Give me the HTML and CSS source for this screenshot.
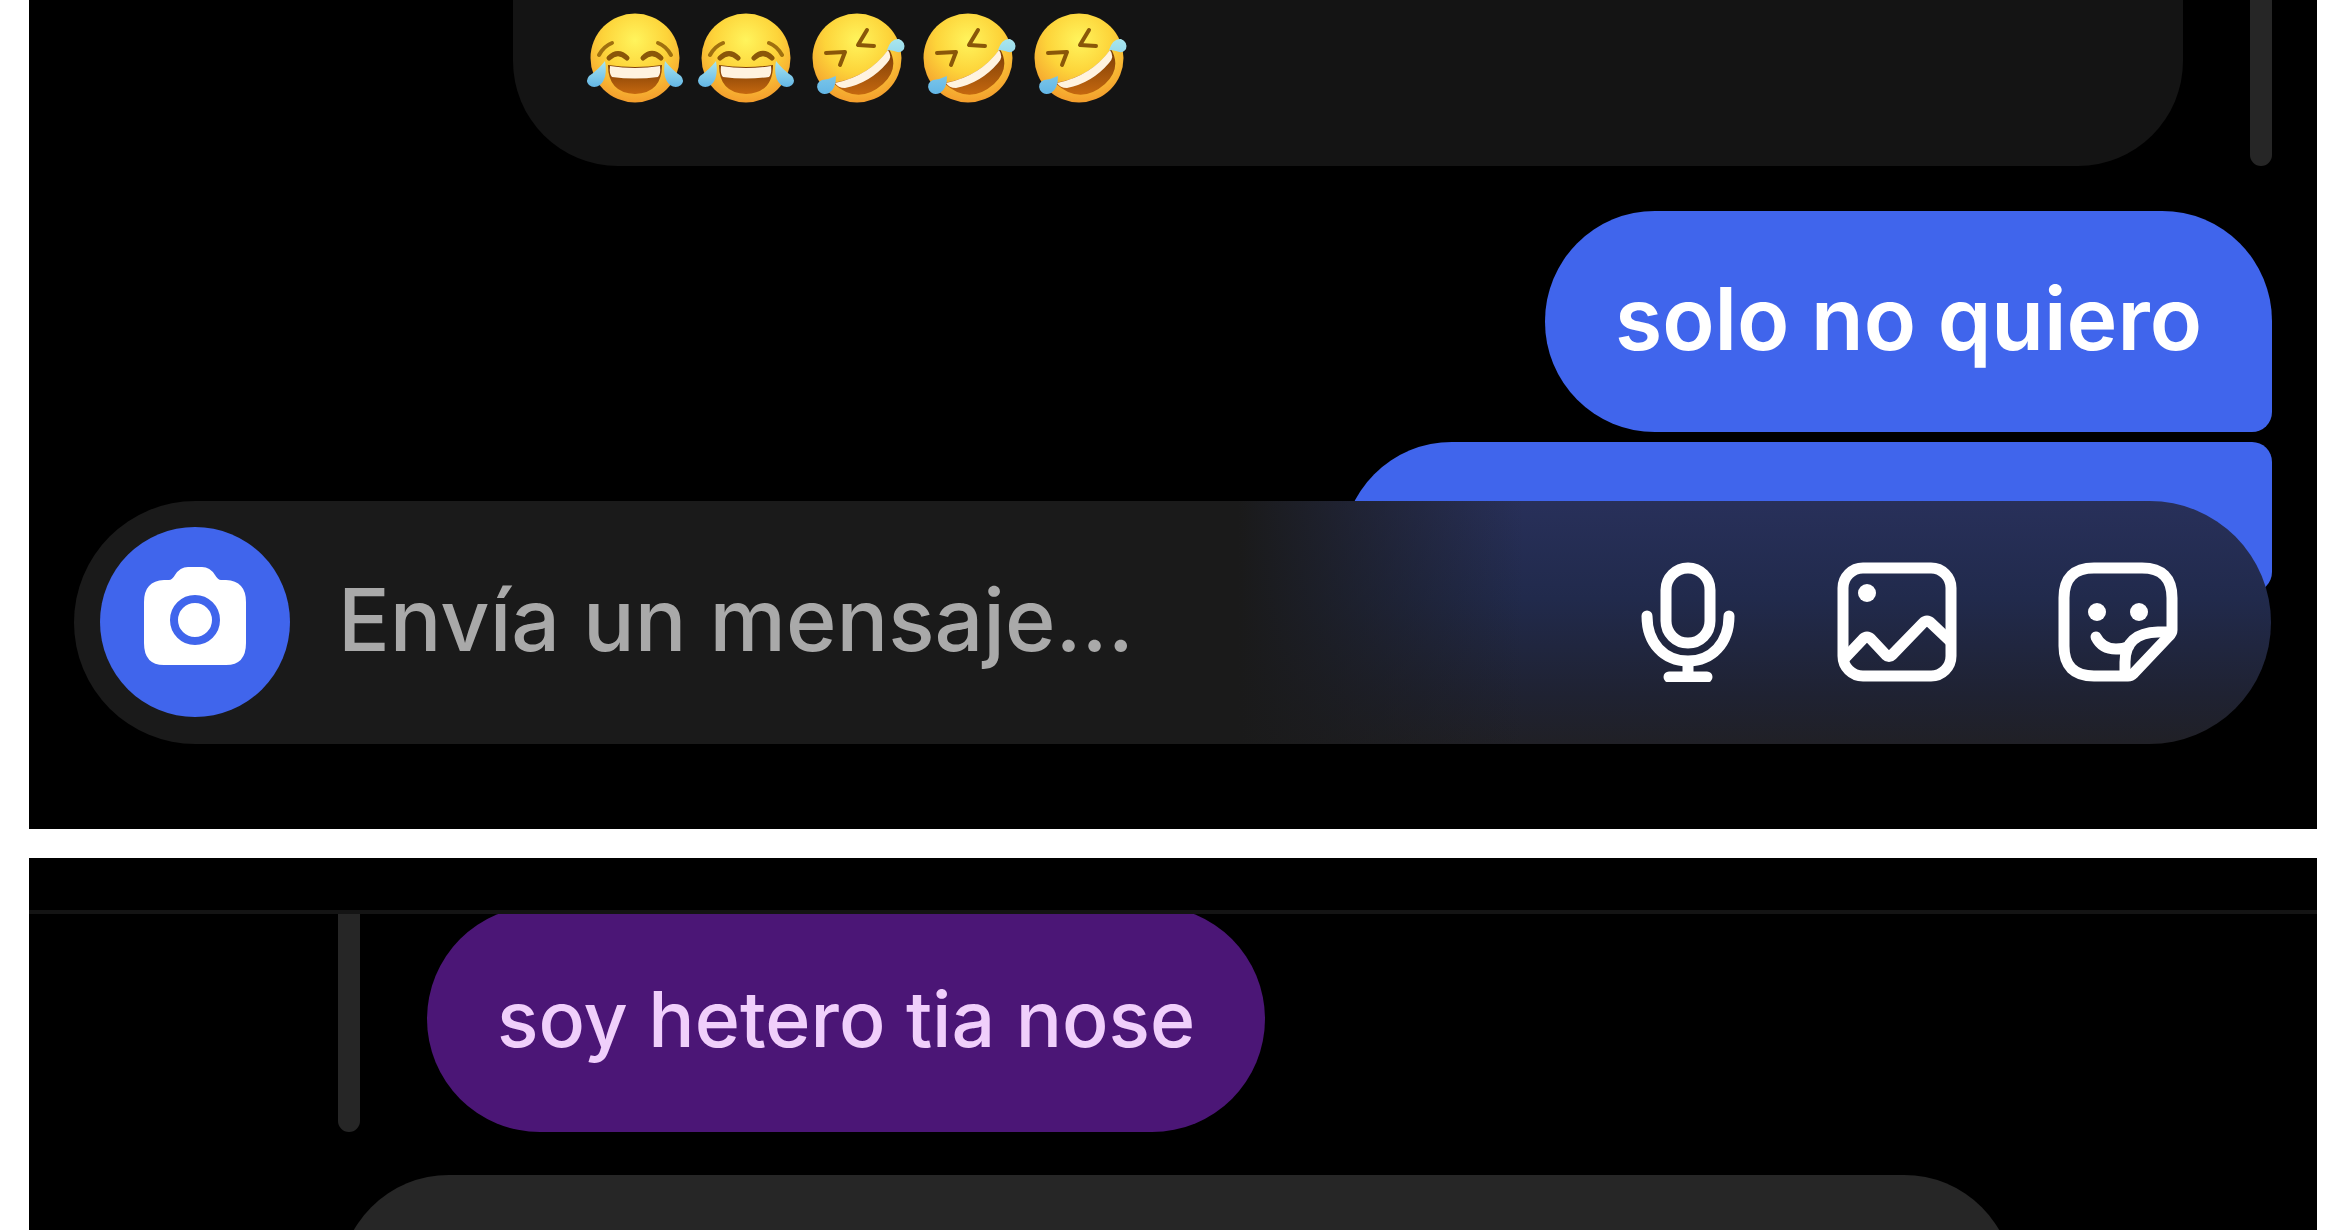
FILE: index.html
```html
<!DOCTYPE html>
<html lang="es">
<head>
<meta charset="utf-8">
<meta name="viewport" content="width=device-width, initial-scale=1">
<title>Mensajes</title>
<link rel="stylesheet" href="styles.css">
</head>
<body>
<svg class="sprite" aria-hidden="true">
  <defs>
    <radialGradient id="skin" cx="50%" cy="30%" r="72%">
      <stop offset="0" stop-color="#fff45c"/>
      <stop offset="0.5" stop-color="#fdd43a"/>
      <stop offset="1" stop-color="#f39a2c"/>
    </radialGradient>
    <linearGradient id="mouth" x1="0" y1="0" x2="0" y2="1">
      <stop offset="0" stop-color="#7a3c06"/>
      <stop offset="1" stop-color="#c5680f"/>
    </linearGradient>
    <linearGradient id="tear" x1="0" y1="0" x2="0" y2="1">
      <stop offset="0" stop-color="#a9e6ee"/>
      <stop offset="1" stop-color="#63b6e6"/>
    </linearGradient>
    <symbol id="joy" viewBox="0 0 100 92">
      <circle cx="50" cy="46" r="44.500" fill="url(#skin)"/>
      <path d="M14 43Q19 34 27 31M86 43Q81 34 73 31" fill="none" stroke="#a0700f" stroke-width="4" stroke-linecap="round"/>
      <path d="M24 46Q33 37 42 46M58 46Q67 37 76 46" fill="none" stroke="#8a5709" stroke-width="5" stroke-linecap="round"/>
      <path d="M23 53Q50 57 77 53Q77 81 50 82Q23 81 23 53Z" fill="url(#mouth)"/>
      <path d="M25 54Q50 58 75 54Q76 62 73 65Q50 68 27 65Q24 62 25 54Z" fill="#fff3e0"/>
      <path d="M20 49Q23 66 15 73Q9 77 4 73Q0 69 4 64Q13 58 20 49ZM80 49Q77 66 85 73Q91 77 96 73Q100 69 96 64Q87 58 80 49Z" fill="url(#tear)"/>
    </symbol>
    <symbol id="rofl" viewBox="0 0 100 92">
      <circle cx="50" cy="46" r="44.500" fill="url(#skin)"/>
      <path d="M60 18L51 33L67 34M19 41L38 40L33 53" fill="none" stroke="#8a5709" stroke-width="4" stroke-linejoin="round" stroke-linecap="round"/>
      <path d="M26 71Q62 65 82 37Q93 56 76 72Q51 94 26 71Z" fill="url(#mouth)"/>
      <path d="M28 71Q62 64 81 38Q86 45 80 51Q63 71 38 76Q31 76 28 71Z" fill="#fff3e0"/>
      <path d="M29 64Q29 77 22 81Q15 84 11 78Q8 71 15 68Q23 67 29 64ZM80 38Q84 26 92 27Q99 30 97 37Q94 42 87 39Q83 38 80 38Z" fill="url(#tear)"/>
    </symbol>
  </defs>
</svg>

<main class="chats">
  <section class="chat chat-sent" aria-label="Conversación">
    <div class="quote quote-right">
      <p class="bubble bubble-quoted" role="img" aria-label="Risas">
        <svg class="emoji"><use href="#joy"/></svg>
        <svg class="emoji"><use href="#joy"/></svg>
        <svg class="emoji"><use href="#rofl"/></svg>
        <svg class="emoji"><use href="#rofl"/></svg>
        <svg class="emoji"><use href="#rofl"/></svg>
      </p>
      <span class="thread"></span>
    </div>
    <p class="bubble bubble-sent">solo no quiero</p>
    <p class="bubble bubble-sent bubble-next"></p>

    <form class="composer">
      <button class="camera" type="button" aria-label="Cámara">
        <svg class="camera-icon" viewBox="0 0 102 98">
          <path fill="#fff" d="M20 13H25Q28 13 31 8Q36 0 44 0H58Q66 0 71 8Q74 13 77 13H82Q102 14 102 35V76Q102 98 82 98H20Q0 98 0 76V35Q0 14 20 13Z"/>
          <circle cx="51" cy="53" r="21" fill="#fff" stroke="#4065ec" stroke-width="8"/>
        </svg>
      </button>
      <input class="field" type="text" aria-label="Mensaje" placeholder="Envía un mensaje...">
      <div class="tools">
        <button class="tool" type="button" aria-label="Grabar audio">
          <svg class="tool-icon" width="96" viewBox="0 0 96 120">
            <rect x="26" y="6" width="44" height="75" rx="22"/>
            <path d="M7 54C7 81 24 99 48 99S89 81 89 54M48 99V115M29 115H67"/>
          </svg>
        </button>
        <button class="tool" type="button" aria-label="Enviar foto">
          <svg class="tool-icon" width="120" viewBox="0 0 120 120">
            <rect x="6" y="6" width="108" height="108" rx="20"/>
            <path d="M8 96L26 77Q30 73 34 77L49 93Q52 96 55 93L86 61Q90 57 94 61L113 79"/>
            <circle class="dot" cx="30" cy="31" r="9"/>
          </svg>
        </button>
        <button class="tool" type="button" aria-label="Stickers">
          <svg class="tool-icon" width="120" viewBox="0 0 120 120">
            <path d="M70 114H36Q6 114 6 84V36Q6 6 36 6H84Q114 6 114 36V68Q114 71 111 74L76 111Q73 114 70 114Z"/>
            <path d="M112 70H100Q67 71 67 100V112M38 75Q44 87 58 87Q66 87 71 84"/>
            <circle class="dot" cx="39" cy="50" r="9"/>
            <circle class="dot" cx="81" cy="50" r="9"/>
          </svg>
        </button>
      </div>
    </form>
  </section>

  <section class="chat chat-received" aria-label="Segunda conversación">
    <div class="quote quote-left">
      <span class="thread"></span>
      <p class="bubble bubble-purple">soy hetero tia nose</p>
    </div>
    <p class="bubble bubble-received"></p>
  </section>
</main>
</body>
</html>
```

FILE: styles.css
```css
* {
  box-sizing: border-box;
}

body {
  margin: 0;
  background: #fff;
  font-family: Inter, "Liberation Sans", sans-serif;
}

p {
  margin: 0;
}

button {
  padding: 0;
  border: 0;
  background: none;
}

.sprite {
  position: absolute;
  width: 0;
  height: 0;
}

.chats {
  display: flex;
  flex-direction: column;
  gap: 29px;
  height: 100vh;
  padding: 0 33px 0 29px;
  overflow: hidden;
}

.chat {
  display: flex;
  flex-direction: column;
  background: #000;
}

.chat-sent {
  position: relative;
  flex: none;
  align-items: flex-end;
  padding: 0 45px 237px;
}

.chat-received {
  flex: 1;
  min-height: 0;
  overflow: hidden;
  padding-top: 52px;
}

.quote {
  display: flex;
  flex: none;
}

.quote-right {
  align-self: stretch;
  justify-content: flex-end;
  gap: 67px;
  margin-bottom: 45px;
}

.quote-left {
  gap: 67px;
  padding-left: 309px;
  border-top: 4px solid #141414;
  overflow: hidden;
}

.thread {
  width: 22px;
  border-radius: 0 0 11px 11px;
  background: #262626;
}

.bubble {
  border-radius: 110px;
}

.bubble-quoted {
  display: flex;
  gap: 11px;
  width: 76%;
  padding: 12px 70px 62px 72px;
  border-radius: 0 0 105px 105px;
  background: #141414;
}

.emoji {
  width: 100px;
  height: 92px;
}

.bubble-sent {
  padding: 52px 70px 57px;
  border-bottom-right-radius: 20px;
  background: #4065ec;
  color: #fff;
  font-size: 86px;
  font-weight: 600;
  line-height: 112px;
}

.bubble-next {
  width: 42.3%;
  height: 150px;
  margin-top: 10px;
  padding: 0;
  border-radius: 110px 20px 20px 40px;
}

.composer {
  position: absolute;
  right: 46px;
  bottom: 85px;
  left: 45px;
  display: flex;
  align-items: center;
  padding: 26px 93px 27px 26px;
  border-radius: 122px;
  background:
    linear-gradient(90deg, #1a1a1a 53%, transparent 66%),
    linear-gradient(#28305a, #212a4c 40%, #1f2232 80%, #202026);
}

.camera {
  display: grid;
  flex: none;
  place-items: center;
  width: 190px;
  height: 190px;
  border-radius: 50%;
  background: #4065ec;
}

.camera-icon {
  width: 102px;
  height: 98px;
  margin-bottom: 12px;
}

.field {
  flex: 1;
  min-width: 0;
  margin-left: 48px;
  padding: 0 0 4px;
  border: 0;
  outline: 0;
  background: none;
  color: #fff;
  font: 500 86px/112px Inter, "Liberation Sans", sans-serif;
}

.field::placeholder {
  color: #a9a9a9;
  opacity: 1;
}

.tools {
  display: flex;
  gap: 101px;
}

.tool,
.tool-icon {
  display: block;
  height: 120px;
}

.tool-icon {
  fill: none;
  stroke: #fff;
  stroke-width: 11px;
  stroke-linecap: round;
  stroke-linejoin: round;
}

.tool-icon .dot {
  fill: #fff;
  stroke: none;
}

.bubble-purple {
  margin-top: -8px;
  padding: 59px 70px;
  border-radius: 113px;
  background: #4b1676;
  color: #f0cffb;
  font-size: 77px;
  font-weight: 500;
  line-height: 108px;
}

.bubble-received {
  flex: none;
  width: 73.2%;
  height: 220px;
  margin: 43px 0 0 310px;
  background: #262626;
}
```
